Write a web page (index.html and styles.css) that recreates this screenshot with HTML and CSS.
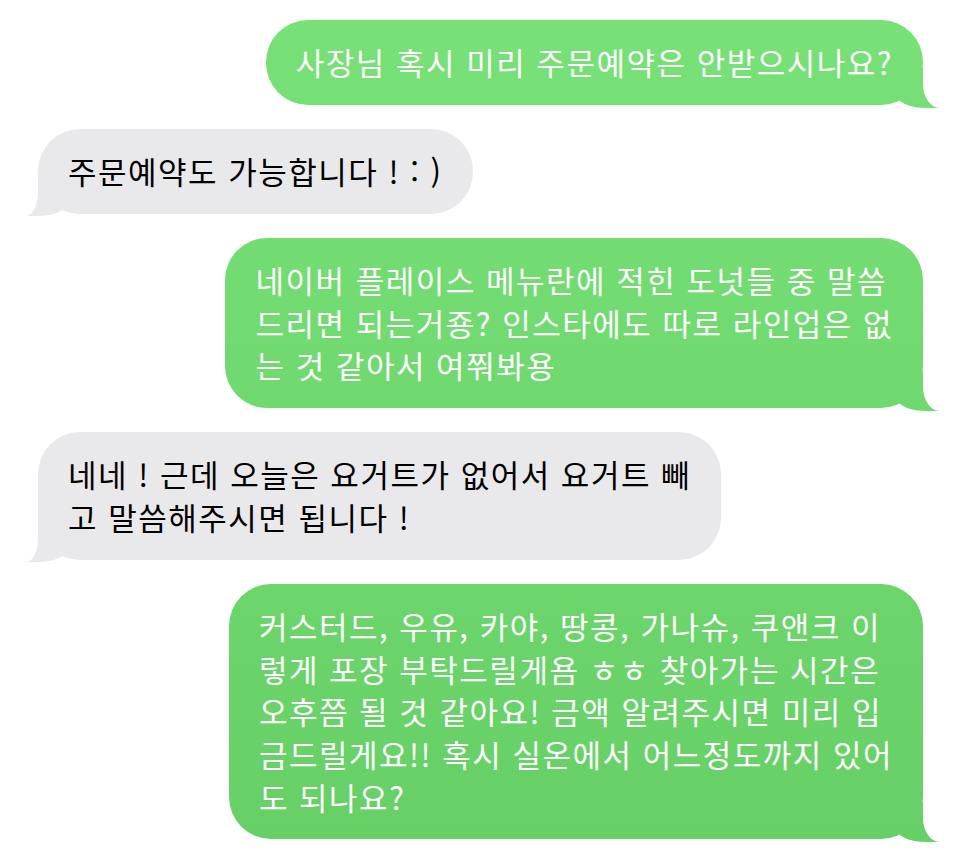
FILE: index.html
```html
<!DOCTYPE html>
<html lang="ko">

<head>
    <meta charset="UTF-8">
    <meta name="viewport" content="width=device-width, initial-scale=1.0">
    <title>Messages</title>
    <link rel="stylesheet" href="styles.css">
</head>

<body>
    <div class="chat">
        <div class="msg me">사장님 혹시 미리 주문예약은 안받으시나요?</div>
        <div class="msg them">주문예약도 가능합니다 ! : )</div>
        <div class="msg me">네이버 플레이스 메뉴란에 적힌 도넛들 중 말씀<br>드리면 되는거죵? 인스타에도 따로 라인업은 없<br>는 것 같아서 여쭤봐용</div>
        <div class="msg them">네네 ! 근데 오늘은 요거트가 없어서 요거트 빼<br>고 말씀해주시면 됩니다 !</div>
        <div class="msg me">커스터드, 우유, 카야, 땅콩, 가나슈, 쿠앤크 이<br>렇게 포장 부탁드릴게욤 ㅎㅎ 찾아가는 시간은<br>오후쯤 될 것 같아요! 금액 알려주시면 미리 입<br>금드릴게요!! 혹시 실온에서 어느정도까지 있어<br>도 되나요?</div>
    </div>
</body>

</html>
```

FILE: styles.css
```css
/* Reset */
* {
    padding: 0;
    margin: 0;
    box-sizing: border-box;
}

body {
    font-family: "Noto Sans CJK KR", "Noto Sans", sans-serif;
    background: #fff;
}

/* Chat column */
.chat {
    display: flex;
    flex-direction: column;
    gap: 24.5px;
    padding: 20px 43px 10px 38px;
}

.msg {
    position: relative;
    padding: 21px 30px;
    border-radius: 42px;
    font-size: 31px;
    line-height: 42.6px;
    letter-spacing: 1.5px;
    white-space: nowrap;
}

/* Sent bubbles (green, right) */
.me {
    align-self: flex-end;
    color: #fff;
    background: linear-gradient(#78e278, #66cf66) fixed;
}

.me::before {
    content: "";
    position: absolute;
    right: -17px;
    bottom: -3px;
    width: 44px;
    height: 40px;
    background: linear-gradient(#78e278, #66cf66) fixed;
    border-bottom-left-radius: 30px 14px;
}

.me::after {
    content: "";
    position: absolute;
    right: -60px;
    bottom: -3px;
    width: 60px;
    height: 44px;
    background: #fff;
    border-bottom-left-radius: 17px 24px;
}

/* Received bubbles (grey, left) */
.them {
    align-self: flex-start;
    color: #000;
    background: #e9e9eb;
}

.them::before {
    content: "";
    position: absolute;
    left: -12px;
    bottom: -2px;
    width: 40px;
    height: 40px;
    background: #e9e9eb;
    border-bottom-right-radius: 28px 12px;
}

.them::after {
    content: "";
    position: absolute;
    left: -60px;
    bottom: -2px;
    width: 60px;
    height: 44px;
    background: #fff;
    border-bottom-right-radius: 12px 24px;
}
```
